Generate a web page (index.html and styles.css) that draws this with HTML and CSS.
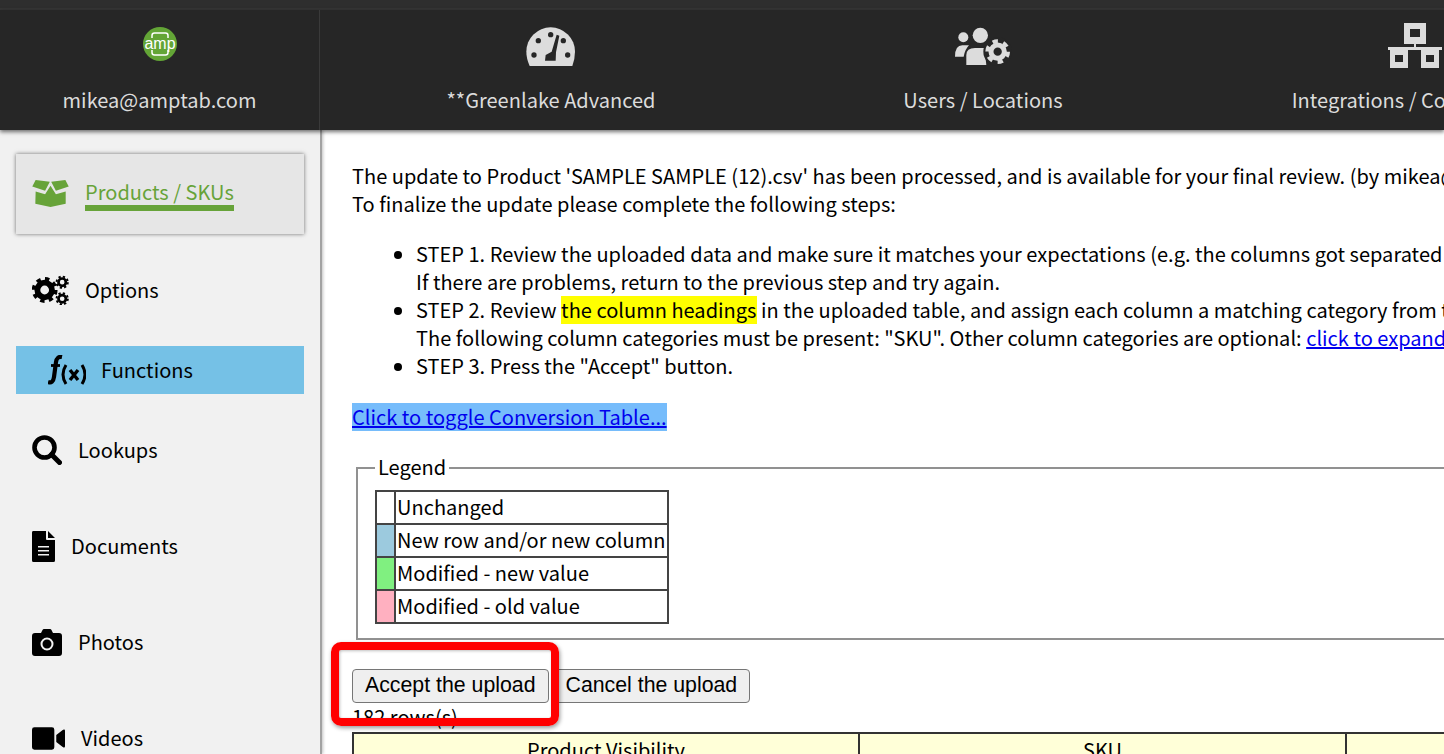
FILE: index.html
```html
<!DOCTYPE html>
<html lang="en">
<head>
<meta charset="utf-8">
<title>Products / SKUs</title>
<link rel="stylesheet" href="styles.css">
</head>
<body>
<div class="topstrip"></div>
<header class="topnav">
  <div class="navitem first">
    <svg class="navicon" width="36" height="36" viewBox="0 0 36 36"><circle cx="18" cy="18" r="17" fill="#63a536"/><path d="M10 12V9.500Q10 7 12.500 7H23.500Q26 7 26 9.500V12M10 24V26.500Q10 29 12.500 29H23.500Q26 29 26 26.500V24" fill="none" stroke="#fff" stroke-width="1.500"/><text x="18" y="23" class="amptext" text-anchor="middle">amp</text></svg>
    <span>mikea@amptab.com</span>
  </div>
  <div class="navitem second">
    <svg class="navicon up" width="64" height="50" viewBox="0 0 192 150"><path d="M32 138Q22 115 22 95A73 73 0 0 1 168 95Q168 115 160 138Z" fill="#dcdcdc"/><g fill="#262626"><circle cx="45" cy="105" r="8"/><circle cx="58" cy="62" r="8"/><circle cx="95" cy="44" r="8"/><circle cx="133" cy="62" r="8"/><circle cx="146" cy="105" r="8"/><path d="M78 122L80 105L98 95L113 44L121 47L111 97L110 122Z"/></g></svg>
    <span>**Greenlake Advanced</span>
  </div>
  <div class="navitem">
    <svg class="navicon up users" width="70" height="50" viewBox="0 0 210 150"><g fill="#dcdcdc"><circle cx="55" cy="52" r="15"/><path d="M30 110Q30 76 52 76H72Q60 88 56 110Z"/><circle cx="106" cy="46" r="23"/><path d="M64 135V105Q64 84 90 84H118L124 135Z"/></g><circle cx="158" cy="95" r="43" fill="#262626"/><circle cx="158" cy="95" r="20" fill="none" stroke="#dcdcdc" stroke-width="15"/><circle cx="158" cy="95" r="31" fill="none" stroke="#dcdcdc" stroke-width="12" stroke-dasharray="16 16.460"/></svg>
    <span>Users / Locations</span>
  </div>
  <div class="navitem">
    <svg class="navicon net" width="56" height="46" viewBox="0 0 56 46"><path d="M27 20V24H1V27H55V24H29V20Z" fill="#dcdcdc"/><path fill-rule="evenodd" fill="#dcdcdc" d="M17 0H39V21H17ZM23 6V14H33V6ZM3 27H21V45H3ZM8 32V39H16V32ZM34 27H52V45H34ZM39 32V39H47V32Z"/></svg>
    <span>Integrations / Connections</span>
  </div>
</header>
<div class="body">
  <nav class="sidebar">
    <a class="sideitem active">
      <svg class="ic-box" width="37" height="27" viewBox="36 28 108 80"><path fill="#67a339" d="M46 28L88 33L74 60L36 47ZM134 28L92 33L106 60L144 47ZM46 62L74 70L90 45L106 70L135 62V98L90 108L45 98Z"/></svg>
      <span class="activelabel">Products / SKUs</span>
    </a>
    <a class="sideitem">
      <svg width="37" height="30" viewBox="0 0 38 30"><circle cx="13" cy="15" r="7.500" fill="none" stroke="#000" stroke-width="6"/><circle cx="13" cy="15" r="11" fill="none" stroke="#000" stroke-width="4.500" stroke-dasharray="4.300 4.340"/><g fill="none" stroke="#000"><circle cx="31" cy="7" r="3.800" stroke-width="2.800"/><circle cx="31" cy="7" r="5.800" stroke-width="2" stroke-dasharray="2.300 2.250"/><circle cx="31" cy="24" r="3.800" stroke-width="2.800"/><circle cx="31" cy="24" r="5.800" stroke-width="2" stroke-dasharray="2.300 2.250"/></g></svg>
      <span>Options</span>
    </a>
    <a class="sideitem fn">
      <svg width="38" height="30" viewBox="0 0 38 30"><g fill="none" stroke="#000"><path d="M0 27Q5 29 6 22L8 7Q9 1 14 2" stroke-width="4.200"/><path d="M3 10.500H12" stroke-width="2.800"/><path d="M18 10Q12 19.500 18 29M34 10Q40 19.500 34 29" stroke-width="3"/><path d="M22 15L30 25M30 15L22 25" stroke-width="3.400"/></g></svg>
      <span>Functions</span>
    </a>
    <a class="sideitem">
      <svg width="30" height="30" viewBox="0 0 30 30"><circle cx="12.500" cy="12.500" r="10" fill="none" stroke="#000" stroke-width="4.600"/><path d="M19.500 19.500L27.500 27.500" stroke="#000" stroke-width="5" stroke-linecap="round"/></svg>
      <span>Lookups</span>
    </a>
    <a class="sideitem">
      <svg width="23" height="31" viewBox="0 0 23 31"><path fill-rule="evenodd" d="M1 0H14V8Q14 9 15 9H23V29.500Q23 31 21.500 31H1.500Q0 31 0 29.500V1.500Q0 0 1 0ZM6 15V16.500H17V15ZM6 19V20.500H17V19ZM6 23V24.500H17V23ZM16 0L23 7H16Z"/></svg>
      <span>Documents</span>
    </a>
    <a class="sideitem">
      <svg width="30" height="27" viewBox="0 0 30 27"><path fill-rule="evenodd" d="M3 4H9L10.500 1Q11 0 12 0H18Q19 0 19.500 1L21 4H27Q30 4 30 7V24Q30 27 27 27H3Q0 27 0 24V7Q0 4 3 4ZM15 8.500A6.500 6.500 0 1 0 15 21.500A6.500 6.500 0 1 0 15 8.500ZM15 10.500A4.500 4.500 0 1 1 15 19.500A4.500 4.500 0 1 1 15 10.500Z"/></svg>
      <span>Photos</span>
    </a>
    <a class="sideitem">
      <svg width="33" height="23" viewBox="0 0 34 23"><path d="M2.500 0H20.500Q23 0 23 2.500V20.500Q23 23 20.500 23H2.500Q0 23 0 20.500V2.500Q0 0 2.500 0ZM25 8L32 2.500Q34 1.500 34 3.500V19.500Q34 21.500 32 20.500L25 15Z"/></svg>
      <span>Videos</span>
    </a>
  </nav>
  <main class="content">
    <p class="line">The update to Product 'SAMPLE SAMPLE (12).csv' has been processed, and is available for your final review. (by mikea@amptab.com)</p>
    <p class="line">To finalize the update please complete the following steps:</p>
    <ul class="steps">
      <li>STEP 1. Review the uploaded data and make sure it matches your expectations (e.g. the columns got separated correctly).<br>If there are problems, return to the previous step and try again.</li>
      <li>STEP 2. Review <span class="mark">the column headings</span> in the uploaded table, and assign each column a matching category from the dropdown.<br>The following column categories must be present: "SKU". Other column categories are optional: <a class="link" href="#">click to expand</a></li>
      <li>STEP 3. Press the "Accept" button.</li>
    </ul>
    <p class="toggle"><a class="link selected" href="#">Click to toggle Conversion Table...</a></p>
    <fieldset class="legendbox">
      <legend>Legend</legend>
      <table class="legendtable">
        <tr><td class="sw"></td><td>Unchanged</td></tr>
        <tr><td class="sw blue"></td><td>New row and/or new column</td></tr>
        <tr><td class="sw green"></td><td>Modified - new value</td></tr>
        <tr><td class="sw pink"></td><td>Modified - old value</td></tr>
      </table>
    </fieldset>
    <div class="actions">
      <button class="btn accept">Accept the upload</button>
      <button class="btn cancel">Cancel the upload</button>
    </div>
    <div class="rowcount">182 rows(s)</div>
    <table class="datatable">
      <tr><th class="c1">Product Visibility</th><th class="c2">SKU</th><th class="c3">Name</th></tr>
    </table>
    <div class="callout"></div>
  </main>
</div>
</body>
</html>
```
FILE: styles.css
```css
* { box-sizing: border-box; }
html, body { margin: 0; height: 754px; overflow: hidden; }
body {
  font-family: "Noto Sans CJK SC", "Noto Sans", sans-serif;
  font-size: 20px;
  line-height: 28px;
  letter-spacing: 0.02px;
  color: #000;
  background: #fff;
  display: flex;
  flex-direction: column;
}
.topstrip { height: 10px; flex: none; background: #2e2e2e; border-bottom: 2px solid #353535; }
.topnav {
  height: 120px;
  flex: none;
  display: flex;
  background: #262626;
  color: #dcdcdc;
  box-shadow: 0 2px 4px rgba(0,0,0,.55);
  position: relative;
  z-index: 2;
  overflow: hidden;
}
.navitem {
  flex: none;
  width: 432px;
  display: flex;
  flex-direction: column;
  align-items: center;
  white-space: nowrap;
  padding-top: 15px;
}
.navitem.first {
  width: 320px;
  border-right: 1px solid #3a3a3a;
  padding-top: 16px;
}
.navitem.second { margin-left: 15px; }
.navitem span { position: absolute; top: 76px; line-height: 28px; }
.navicon { display: block; }
.navicon.up { margin-top: -5px; }
.navicon.users { margin-right: 6px; }
.navicon.net { margin-top: -2px; }
.amptext { font-family: "Liberation Sans", sans-serif; font-size: 16px; fill: #fff; }
.body { flex: 1; display: flex; min-height: 0; }
.sidebar {
  width: 322px;
  flex: none;
  background: #f1f1f1;
  border-right: 2px solid #a2a2a2;
  box-shadow: 1px 0 3px rgba(0,0,0,.25);
  padding: 24px 16px 0;
  display: flex;
  flex-direction: column;
  gap: 16px;
  overflow: hidden;
}
.sideitem {
  flex: none;
  height: 80px;
  width: 288px;
  padding-left: 16px;
  display: flex;
  align-items: center;
  gap: 16px;
  white-space: nowrap;
}
.sideitem svg { flex: none; }
.ic-box { margin-top: -2px; }
.active { background: #e6e6e6; box-shadow: 0 0 4px rgba(0,0,0,.55); color: #67a339; }
.activelabel { border-bottom: 6px solid #67a339; line-height: 26px; margin-top: 2px; }
.fn { height: 48px; background: #75c1e6; padding-left: 32px; gap: 15px; }
.content {
  flex: 1;
  min-width: 0;
  padding: 32px 0 0 30px;
  overflow: hidden;
  position: relative;
  white-space: nowrap;
}
.line { margin: 0; }
.steps { margin: 22px 0 0; padding: 0 0 0 64px; }
.mark { background: #ffff00; display: inline-block; }
.link { color: #0000ee; text-decoration: underline; }
.selected { background: #76bcfb; display: inline-block; }
.toggle { margin: 23px 0 0; }
.legendbox {
  margin: 23px 0 0 4px;
  width: 1400px;
  border: 2px solid #919191;
  padding: 8px 0 14px 17px;
}
.legendbox legend { padding: 0 3px 2px; line-height: 26px; margin-left: 0; }
.legendtable { border-collapse: collapse; width: 294px; }
.legendtable td { border: 2px solid #444; height: 33px; padding: 0 1px 2px; line-height: 28px; }
.legendtable .sw { width: 19px; }
.blue { background: #9ccade; }
.green { background: #80f080; }
.pink { background: #ffb0c0; }
.actions { display: flex; gap: 4px; margin-top: 29px; }
.btn {
  font-family: "Liberation Sans", Arial, sans-serif;
  font-size: 21.300px;
  letter-spacing: 0;
  line-height: 24px;
  height: 34px;
  padding: 0 12px 2px;
  border: 1px solid #767676;
  border-radius: 4px;
  background: #efefef;
  color: #000;
}
.rowcount { line-height: 28px; }
.datatable {
  border-collapse: collapse;
  table-layout: fixed;
  width: 1400px;
  margin: 1px 0 0;
}
.datatable th {
  background: #ffffd8;
  border: 2px solid #333;
  font-weight: 400;
  height: 44px;
  padding: 2px 0 0;
  vertical-align: top;
}
.c1 { width: 506px; }
.c2 { width: 487px; }
.callout {
  position: absolute;
  left: 9px;
  top: 512px;
  width: 228px;
  height: 84px;
  border: 8px solid #ff0000;
  border-radius: 10px;
  box-shadow: 1px 2px 4px rgba(0,0,0,.4), inset 1px 1px 3px rgba(0,0,0,.25);
}
```
